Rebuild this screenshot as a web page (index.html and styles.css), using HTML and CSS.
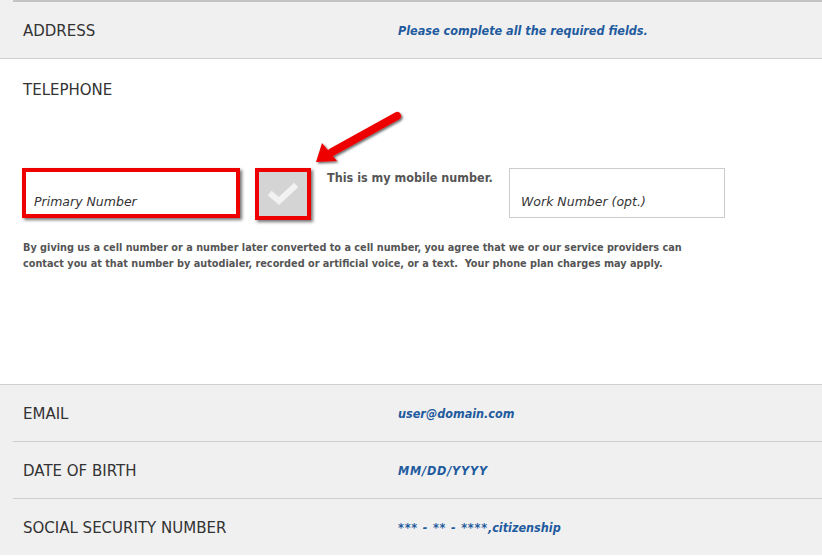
FILE: index.html
```html
<!DOCTYPE html>
<html lang="en">
<head>
  <meta charset="UTF-8">
  <title>Contact information</title>
  <link rel="stylesheet" href="styles.css">
</head>
<body>
  <section class="block block-gray">
    <div class="block-inner top-rule">
      <div class="row">
        <span class="label">ADDRESS</span>
        <span class="value">Please complete all the required fields.</span>
      </div>
    </div>
  </section>

  <section class="phone">
    <h2 class="label phone-title">TELEPHONE</h2>
    <div class="fields">
      <div class="input marked">Primary Number</div>
      <div class="check marked">
        <svg width="30" height="24" viewBox="0 0 30 24">
          <path d="M4 13 L11 19 L26 5" fill="none" stroke="#f2f2f2" stroke-width="6" stroke-linecap="square"/>
        </svg>
      </div>
      <span class="check-text">This is my mobile number.</span>
      <div class="input work">Work Number (opt.)</div>
    </div>
    <p class="notice">By giving us a cell number or a number later converted to a cell number, you agree that we or our service providers can contact you at that number by autodialer, recorded or artificial voice, or a text.&nbsp; Your phone plan charges may apply.</p>
    <svg class="arrow" width="110" height="75" viewBox="0 0 110 75">
      <defs>
        <filter id="shade" x="-20%" y="-20%" width="150%" height="150%">
          <feDropShadow dx="1.5" dy="1.5" stdDeviation="1.2" flood-color="#000" flood-opacity="0.6"/>
        </filter>
      </defs>
      <g filter="url(#shade)" fill="#ee0000">
        <line x1="97" y1="16" x2="32" y2="52" stroke="#ee0000" stroke-width="8" stroke-linecap="round"/>
        <polygon points="16,62 22,43 37,61"/>
      </g>
    </svg>
  </section>

  <section class="block block-gray list">
    <div class="row item">
      <span class="label">EMAIL</span>
      <span class="value">user@domain.com</span>
    </div>
    <div class="row item">
      <span class="label">DATE OF BIRTH</span>
      <span class="value wide">MM/DD/YYYY</span>
    </div>
    <div class="row item">
      <span class="label">SOCIAL SECURITY NUMBER</span>
      <span class="value"><span class="wide">*** - ** - ****</span>,citizenship</span>
    </div>
  </section>
</body>
</html>
```

FILE: styles.css
```css
body {
  margin: 0;
  background-color: #ffffff;
  color: #333;
  font-family: 'DejaVu Sans', Verdana, sans-serif;
}
.block-gray {
  background-color: #f0f0f0;
}
.block {
  border-bottom: 1px solid #cfcfcf;
}
.block-inner {
  padding-left: 13px;
}
.top-rule .row {
  border-top: 2px solid #c4c4c4;
}
.row {
  display: flex;
  align-items: center;
  height: 56px;
  padding-left: 10px;
}
.label {
  width: 375px;
  flex-shrink: 0;
  padding-top: 2px;
  font-size: 15px;
  font-weight: normal;
  color: #333;
}
.value {
  font-family: 'DejaVu Sans Condensed', 'DejaVu Sans', sans-serif;
  font-size: 12.5px;
  font-style: italic;
  font-weight: bold;
  color: #1f5b9e;
}
.wide {
  letter-spacing: 0.8px;
}
.phone {
  position: relative;
  height: 326px;
  padding: 20px 0 0 23px;
  box-sizing: border-box;
  border-bottom: 1px solid #cfcfcf;
}
.phone-title {
  margin: 0;
  line-height: 18px;
}
.fields {
  display: flex;
  align-items: flex-start;
  margin-top: 69px;
}
.input {
  box-sizing: border-box;
  height: 50px;
  padding: 25px 0 0 11px;
  font-size: 12.5px;
  font-style: italic;
  color: #333;
  background-color: #fff;
}
.marked {
  border: 4px solid #ee0000;
  box-shadow: 2px 2px 3px rgba(0, 0, 0, 0.55);
}
.input.marked {
  width: 218px;
  padding: 22px 0 0 8px;
  margin-left: -1px;
}
.check {
  box-sizing: border-box;
  width: 56px;
  height: 52px;
  margin-left: 15px;
  background-color: #d4d4d4;
  display: flex;
  align-items: center;
  justify-content: center;
}
.check-text {
  margin: 2px 0 0 16px;
  width: 182px;
  font-family: 'DejaVu Sans Condensed', 'DejaVu Sans', sans-serif;
  font-size: 12.5px;
  font-weight: bold;
  color: #555;
  white-space: nowrap;
}
.work {
  width: 216px;
  border: 1px solid #cccccc;
  padding-left: 11px;
}
.notice {
  margin: 20px 0 0;
  max-width: 690px;
  font-family: 'DejaVu Sans Condensed', 'DejaVu Sans', sans-serif;
  font-size: 10.8px;
  font-weight: bold;
  line-height: 16px;
  color: #555;
}
.arrow {
  position: absolute;
  left: 300px;
  top: 41px;
}
.list {
  padding-left: 13px;
  border-bottom: none;
  border-top: 1px solid #cfcfcf;
  margin-top: -1px;
}
.item {
  border-bottom: 1px solid #cfcfcf;
}
.item:last-child {
  border-bottom: none;
}
```
